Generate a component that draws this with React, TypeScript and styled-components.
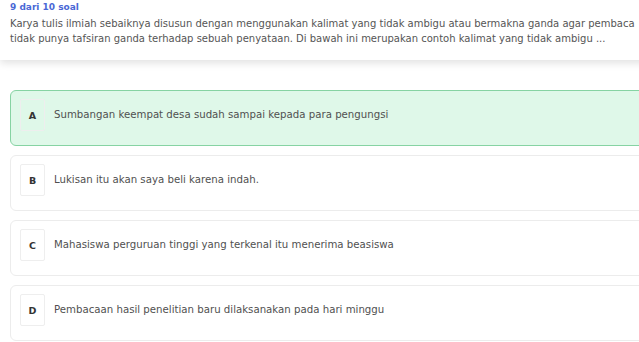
import styled, { createGlobalStyle } from 'styled-components'

const GlobalStyle = createGlobalStyle`
  html, body {
    margin: 0;
    padding: 0;
    background: #ffffff;
    overflow: hidden;
  }
  body {
    font-family: 'DejaVu Sans', 'Noto Sans', sans-serif;
  }
`

const Page = styled.div`
  width: 680px;
  height: 342px;
  overflow: hidden;
`

const QuestionCard = styled.div`
  background: #ffffff;
  padding: 1px 10px 0;
  box-shadow: 0 3px 8px rgba(0, 0, 0, 0.12);
  height: 60px;
  box-sizing: border-box;
`

const Counter = styled.div`
  color: #4a68d6;
  font-size: 9px;
  font-weight: 700;
  line-height: 13px;
  margin-bottom: 3px;
`

const QuestionText = styled.p`
  margin: 0;
  color: #555555;
  font-size: 10px;
  line-height: 14.5px;
  white-space: nowrap;
`

const Options = styled.div`
  display: flex;
  flex-direction: column;
  gap: 9px;
  padding: 30px 0 0 10px;
`

const Option = styled.div<{ $selected?: boolean }>`
  display: flex;
  align-items: flex-start;
  gap: 9px;
  height: 56px;
  box-sizing: border-box;
  padding: 8px 9px 0;
  border-radius: 6px;
  border: 1px solid ${p => (p.$selected ? '#86d3a3' : '#ececec')};
  background: ${p => (p.$selected ? '#dff8e9' : '#ffffff')};
`

const Letter = styled.div`
  width: 25px;
  height: 32px;
  flex-shrink: 0;
  box-sizing: border-box;
  border: 1px solid #eeeeee;
  border-radius: 2px;
  display: flex;
  align-items: center;
  justify-content: center;
  font-size: 9.5px;
  font-weight: 700;
  color: #333333;
`

const OptionText = styled.span`
  font-size: 10.2px;
  line-height: 32px;
  color: #505050;
`

const options = [
  { key: 'A', text: 'Sumbangan keempat desa sudah sampai kepada para pengungsi', selected: true },
  { key: 'B', text: 'Lukisan itu akan saya beli karena indah.' },
  { key: 'C', text: 'Mahasiswa perguruan tinggi yang terkenal itu menerima beasiswa' },
  { key: 'D', text: 'Pembacaan hasil penelitian baru dilaksanakan pada hari minggu' },
]

export default function App() {
  return (
    <Page>
      <GlobalStyle />
      <QuestionCard>
        <Counter>9 dari 10 soal</Counter>
        <QuestionText>
          Karya tulis ilmiah sebaiknya disusun dengan menggunakan kalimat yang tidak ambigu atau bermakna ganda agar pembaca
        </QuestionText>
        <QuestionText>
          tidak punya tafsiran ganda terhadap sebuah penyataan. Di bawah ini merupakan contoh kalimat yang tidak ambigu ...
        </QuestionText>
      </QuestionCard>
      <Options>
        {options.map(o => (
          <Option key={o.key} $selected={o.selected}>
            <Letter>{o.key}</Letter>
            <OptionText>{o.text}</OptionText>
          </Option>
        ))}
      </Options>
    </Page>
  )
}
